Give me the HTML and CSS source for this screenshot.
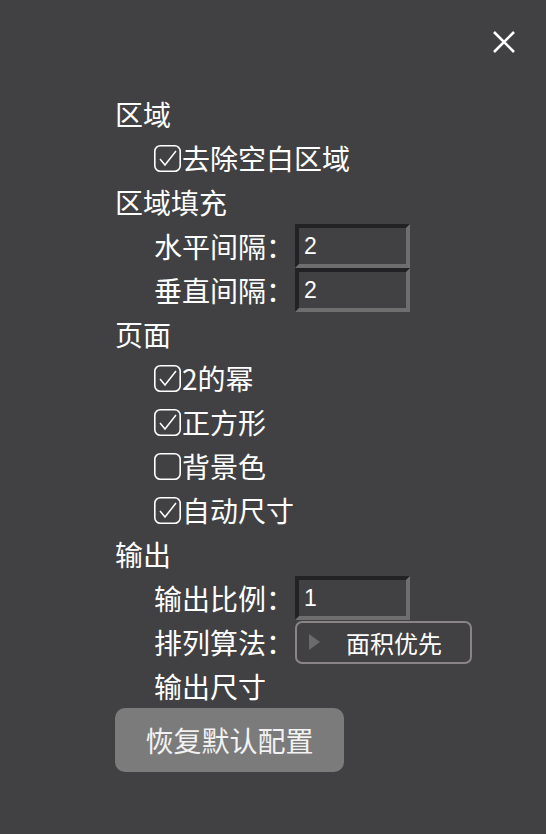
FILE: index.html
```html
<!DOCTYPE html>
<html lang="zh-CN">
<head>
    <meta charset="UTF-8">
    <meta name="viewport" content="width=device-width, initial-scale=1.0">
    <title>设置</title>
    <link rel="stylesheet" href="styles.css">
</head>
<body>
    <div id="settings">
        <button type="button" class="close-button" aria-label="关闭">
            <svg width="24" height="24" viewBox="0 0 24 24">
                <path d="M2 2 L22 22 M22 2 L2 22" stroke="#fff" stroke-width="2.6" fill="none"/>
            </svg>
        </button>

        <div class="row title">区域</div>
        <div class="row sub"><svg class="check" viewBox="0 0 27 27"><rect x="0.8" y="0.8" width="25.4" height="25.4" rx="5.5"/><path d="M6 14 L11 20 L22 6"/></svg>去除空白区域</div>

        <div class="row title">区域填充</div>
        <div class="row sub">水平间隔：<input type="text" class="num-input" value="2"></div>
        <div class="row sub">垂直间隔：<input type="text" class="num-input" value="2"></div>

        <div class="row title">页面</div>
        <div class="row sub"><svg class="check" viewBox="0 0 27 27"><rect x="0.8" y="0.8" width="25.4" height="25.4" rx="5.5"/><path d="M6 14 L11 20 L22 6"/></svg>2的幂</div>
        <div class="row sub"><svg class="check" viewBox="0 0 27 27"><rect x="0.8" y="0.8" width="25.4" height="25.4" rx="5.5"/><path d="M6 14 L11 20 L22 6"/></svg>正方形</div>
        <div class="row sub"><svg class="check" viewBox="0 0 27 27"><rect x="0.8" y="0.8" width="25.4" height="25.4" rx="5.5"/></svg>背景色</div>
        <div class="row sub"><svg class="check" viewBox="0 0 27 27"><rect x="0.8" y="0.8" width="25.4" height="25.4" rx="5.5"/><path d="M6 14 L11 20 L22 6"/></svg>自动尺寸</div>

        <div class="row title">输出</div>
        <div class="row sub">输出比例：<input type="text" class="num-input" value="1"></div>
        <div class="row sub">排列算法：<div class="select"><span class="arrow"></span><span class="select-text">面积优先</span></div></div>
        <div class="row sub">输出尺寸</div>

        <button type="button" class="reset-button">恢复默认配置</button>
    </div>
</body>
</html>
```

FILE: styles.css
```css
body {
    margin: 0;
    padding: 0;
    background-color: #414143;
    color: #fff;
    font-family: "Noto Sans CJK SC", "Noto Sans", sans-serif;
    font-size: 28px;
    height: 834px;
    overflow: hidden;
}
#settings {
    position: relative;
    padding: 92px 0 0 115px;
}
.close-button {
    position: absolute;
    top: 30px;
    right: 30px;
    width: 24px;
    height: 24px;
    padding: 0;
    border: none;
    background: none;
    cursor: pointer;
}
.close-button svg {
    display: block;
}
.row {
    display: flex;
    align-items: center;
    height: 44px;
    white-space: nowrap;
}
.sub {
    padding-left: 39px;
}
.check {
    width: 27px;
    height: 27px;
    margin-right: 1px;
    flex-shrink: 0;
}
.check rect,
.check path {
    fill: none;
    stroke: #fff;
    stroke-width: 1.6;
}
.check path {
    stroke-width: 1.5;
}
.num-input {
    box-sizing: border-box;
    width: 115px;
    height: 44px;
    margin-left: 1px;
    padding: 0 0 0 5px;
    background-color: #414143;
    color: #fff;
    font-family: "Liberation Sans", Arial, sans-serif;
    font-size: 23px;
    border-style: solid;
    border-width: 4px;
    border-color: #222224 #6e6e6e #6e6e6e #222224;
    outline: none;
}
.select {
    box-sizing: border-box;
    display: flex;
    align-items: center;
    width: 177px;
    height: 43px;
    margin-left: 1px;
    border: 2px solid #8a8486;
    border-radius: 7px;
    font-size: 24px;
}
.arrow {
    width: 0;
    height: 0;
    margin-left: 12px;
    border-top: 8px solid transparent;
    border-bottom: 8px solid transparent;
    border-left: 11px solid #6b6b6b;
}
.select-text {
    margin-left: 26px;
}
.reset-button {
    display: block;
    width: 229px;
    height: 64px;
    padding: 0;
    border: none;
    border-radius: 10px;
    background-color: #7b7b7b;
    color: #f2f2f2;
    font-family: "Noto Sans CJK SC", "Noto Sans", sans-serif;
    font-size: 28px;
    cursor: pointer;
}
```
